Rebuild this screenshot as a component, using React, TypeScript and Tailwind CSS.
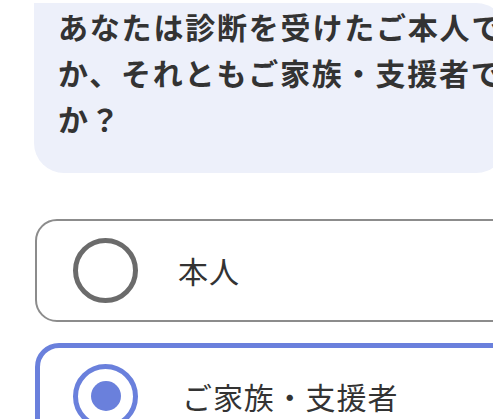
import React from "react";

const jp = { fontFamily: '"Noto Sans CJK JP", "Noto Sans", sans-serif' };

function Radio({ checked }: { checked: boolean }) {
  return (
    <span
      className={
        "flex h-[65px] w-[65px] shrink-0 items-center justify-center rounded-full border-[5px] " +
        (checked ? "border-[#6a80dc]" : "border-[#6b6b6b]")
      }
    >
      {checked && <span className="h-[30px] w-[30px] rounded-full bg-[#6a80dc]" />}
    </span>
  );
}

export default function App() {
  return (
    <div className="h-[419px] w-[498px] overflow-hidden bg-white" style={jp}>
      <div className="h-[419px] w-[493px] overflow-hidden">
        <div className="ml-[34px] mt-[5px] w-[472px] rounded-[30px] rounded-tl-none bg-[#edf0fa] pb-[32px] pl-[24px]">
          <p className="-mt-[2px] whitespace-nowrap text-[30px] font-bold leading-[46px] tracking-[0.06em] text-[#333333]">
            あなたは診断を受けたご本人で
            <br />
            か、それともご家族・支援者で
            <br />
            か？
          </p>
        </div>

        <div className="ml-[35px] mt-[46px] flex w-[480px] flex-col gap-[21px]">
          <label className="flex h-[103px] items-center rounded-[22px] border-2 border-[#8c8c8c] pl-[36px]">
            <Radio checked={false} />
            <span className="ml-[40px] text-[30px] tracking-[0.03em] text-[#333333]">本人</span>
          </label>
          <label className="flex h-[106px] items-center rounded-[24px] border-[5px] border-[#6a80dc] pl-[33px]">
            <Radio checked />
            <span className="ml-[44px] text-[30px] tracking-[0.03em] text-[#333333]">ご家族・支援者</span>
          </label>
        </div>
      </div>
    </div>
  );
}
